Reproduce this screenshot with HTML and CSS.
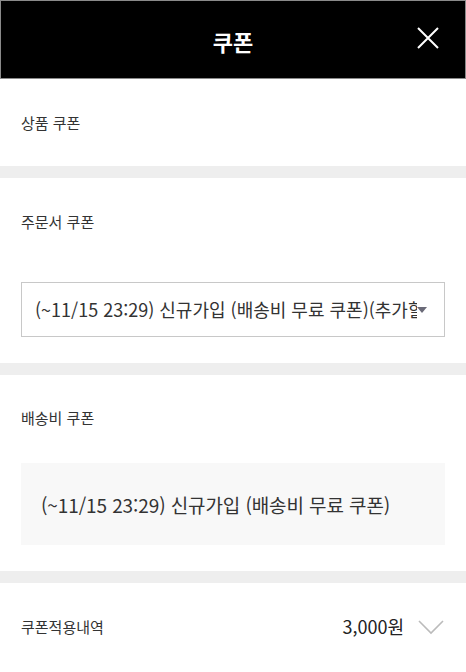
FILE: index.html
```html
<!DOCTYPE html>
<html lang="ko">
<head>
<meta charset="utf-8">
<link rel="stylesheet" href="styles.css">
</head>
<body>
<div class="page">
  <header class="header">
    <h1 class="title">쿠폰</h1>
    <svg class="close" width="22" height="22" viewBox="0 0 22 22"><path d="M1 1L21 21M21 1L1 21" stroke="#fff" stroke-width="2" fill="none"/></svg>
  </header>
  <section class="sec sec1">
    <div class="label">상품 쿠폰</div>
  </section>
  <div class="gap"></div>
  <section class="sec sec2">
    <div class="label">주문서 쿠폰</div>
    <div class="select">
      <span class="select-text">(~11/15 23:29) 신규가입 (배송비 무료 쿠폰)(추가할인)</span>
      <span class="caret"></span>
    </div>
  </section>
  <div class="gap"></div>
  <section class="sec sec3">
    <div class="label">배송비 쿠폰</div>
    <div class="info">(~11/15 23:29) 신규가입 (배송비 무료 쿠폰)</div>
  </section>
  <div class="gap"></div>
  <section class="sum">
    <div class="label">쿠폰적용내역</div>
    <div class="sum-right">
      <span class="amount">3,000원</span>
      <svg class="chev" width="26" height="15" viewBox="0 0 26 15"><path d="M1 1L13 13L25 1" stroke="#bbb" stroke-width="1.6" fill="none"/></svg>
    </div>
  </section>
</div>
</body>
</html>
```
FILE: styles.css
```css
* { box-sizing: border-box; margin: 0; padding: 0; }
body {
  margin: 0;
  background: #fff;
  font-family: "Noto Sans CJK KR", "Noto Sans", sans-serif;
  color: #333;
}
.page { width: 466px; }
.header {
  height: 79px;
  background: #000;
  border: 1px solid #8a8a8a;
  display: flex;
  align-items: center;
  justify-content: center;
  position: relative;
}
.title {
  color: #fff;
  font-size: 22px;
  font-weight: 700;
  line-height: 1;
  margin-top: 2px;
}
.close {
  position: absolute;
  right: 26px;
  top: 26px;
}
.sec { padding: 0 21px; }
.label {
  font-size: 15px;
  line-height: 20px;
  color: #333;
}
.sec1 { height: 87px; padding-top: 34px; }
.gap { height: 12px; background: #eeeeee; }
.sec2 { height: 185px; padding-top: 34px; }
.select {
  margin-top: 50px;
  height: 55px;
  border: 1px solid #c8c8c8;
  display: flex;
  align-items: center;
  padding: 0 17px 0 13px;
  overflow: hidden;
}
.select-text {
  font-size: 18px;
  color: #333;
  white-space: nowrap;
  overflow: hidden;
  flex: 1;
  min-width: 0;
  margin-top: -2px;
}
.caret {
  width: 0; height: 0;
  border-left: 5px solid transparent;
  border-right: 5px solid transparent;
  border-top: 6px solid #6a6a78;
  flex: none;
  margin-left: 0;
}
.sec3 { height: 196px; padding-top: 33px; }
.info {
  margin-top: 35px;
  height: 82px;
  background: #f8f8f8;
  display: flex;
  align-items: center;
  padding-left: 20px;
  font-size: 19px;
  color: #333;
  letter-spacing: -0.1px;
}
.sum {
  height: 86px;
  padding: 0 22px 0 21px;
  display: flex;
  align-items: center;
  justify-content: space-between;
}
.sum .label { margin-top: 2px; }
.sum-right { display: flex; align-items: center; gap: 14px; }
.amount { font-size: 18px; color: #222; }
.chev { display: block; margin-top: 2px; }
```
